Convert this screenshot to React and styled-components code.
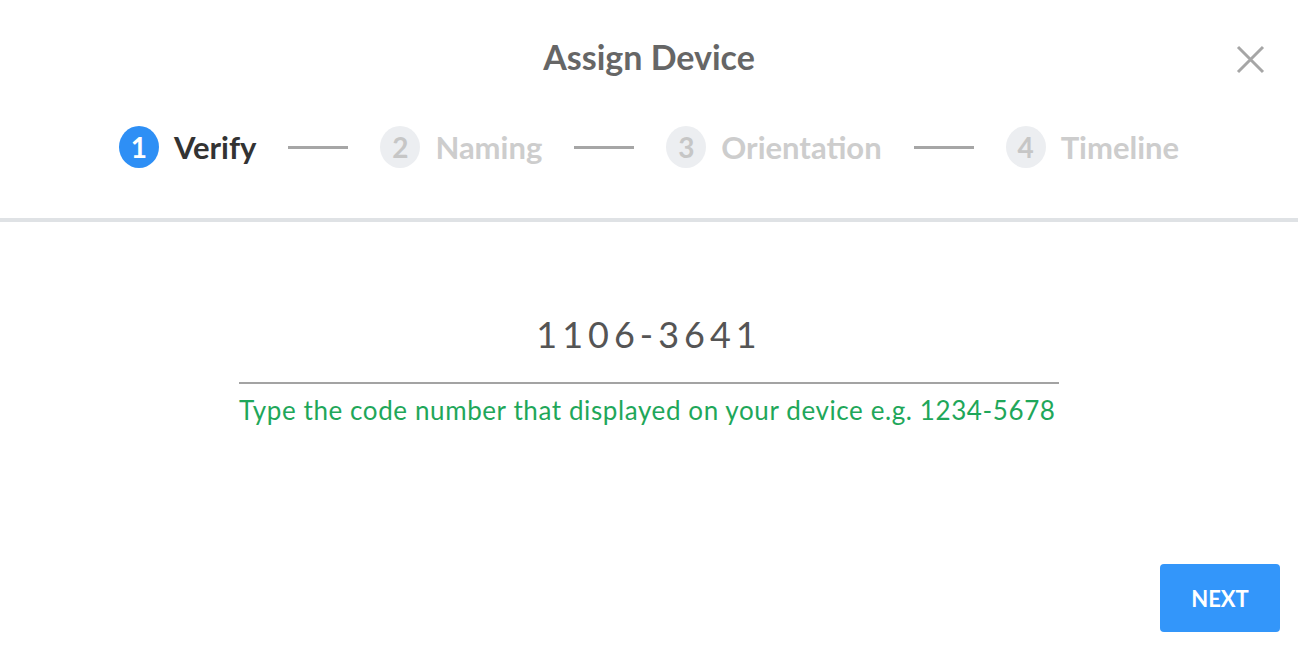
import React, {useState} from 'react'
import styled, {createGlobalStyle} from 'styled-components'

const GlobalStyle = createGlobalStyle`
  html, body {
    margin: 0;
    padding: 0;
    background: #ffffff;
  }
  body {
    font-family: Lato, "Open Sans", sans-serif;
  }
`

const Modal = styled.div`
  display: flex;
  flex-direction: column;
  width: 100vw;
  height: 652px;
  background: #fff;
  overflow: hidden;
`

const Header = styled.header`
  position: relative;
  display: flex;
  flex-direction: column;
  align-items: center;
  padding: 37px 0 50px;
  border-bottom: 4px solid #dfe2e5;
`

const Title = styled.h2`
  margin: 0;
  height: 40px;
  line-height: 40px;
  font-size: 34px;
  font-weight: 700;
  color: #666;
`

const Close = styled.button`
  position: absolute;
  top: 44px;
  right: 32px;
  width: 31px;
  height: 31px;
  padding: 0;
  border: none;
  background: none;
  cursor: pointer;
`

const Stepper = styled.ol`
  display: flex;
  align-items: center;
  margin: 49px 0 0;
  padding: 0;
  list-style: none;
  height: 42px;
`

const Step = styled.li`
  display: flex;
  align-items: center;
  gap: 15px;
`

const Badge = styled.span`
  display: flex;
  align-items: center;
  justify-content: center;
  width: 40px;
  height: 42px;
  border-radius: 50%;
  font-size: 28px;
  font-weight: 700;
  background: ${props => (props.active ? '#2e8ff5' : '#eceef1')};
  color: ${props => (props.active ? '#fff' : '#c6c6c6')};
`

const Label = styled.span`
  font-size: 31px;
  font-weight: 700;
  color: ${props => (props.active ? '#333' : '#cdcdcd')};
`

const Connector = styled.span`
  width: 60px;
  height: 3px;
  margin: 0 32px;
  background: #a6a6a6;
`

const Body = styled.main`
  display: flex;
  flex-direction: column;
  align-items: center;
  padding-top: 80px;
`

const CodeInput = styled.input`
  box-sizing: border-box;
  width: 820px;
  height: 82px;
  padding: 0 0 16px;
  border: none;
  border-bottom: 2px solid #a3a3a3;
  outline: none;
  text-align: center;
  font-family: inherit;
  font-size: 36px;
  letter-spacing: 5px;
  color: #555;
  background: transparent;
`

const Hint = styled.p`
  width: 820px;
  margin: 11px 0 0;
  line-height: 30px;
  font-size: 26px;
  letter-spacing: 0.6px;
  white-space: nowrap;
  color: #1fa75a;
  text-align: left;
`

const Footer = styled.footer`
  display: flex;
  justify-content: flex-end;
  margin-top: auto;
  padding: 0 18px 20px;
`

const NextButton = styled.button`
  width: 120px;
  height: 68px;
  border: none;
  border-radius: 4px;
  background: #3396fa;
  color: #fff;
  font-family: inherit;
  font-size: 22px;
  font-weight: 700;
  cursor: pointer;
`

const steps = ['Verify', 'Naming', 'Orientation', 'Timeline']

const App = () => {
    const [code, setCode] = useState('1106-3641')
    const current = 0

    return (
        <>
            <GlobalStyle/>
            <Modal>
                <Header>
                    <Title>Assign Device</Title>
                    <Close aria-label="Close">
                        <svg width="31" height="31" viewBox="0 0 31 31">
                            <path d="M3 3 L28 28 M28 3 L3 28" stroke="#a6a6a6" strokeWidth="3" fill="none"/>
                        </svg>
                    </Close>
                    <Stepper>
                        {steps.map((step, index) => (
                            <React.Fragment key={step}>
                                {index > 0 && <Connector/>}
                                <Step>
                                    <Badge active={index === current}>{index + 1}</Badge>
                                    <Label active={index === current}>{step}</Label>
                                </Step>
                            </React.Fragment>
                        ))}
                    </Stepper>
                </Header>
                <Body>
                    <CodeInput value={code} onChange={e => setCode(e.target.value)}/>
                    <Hint>Type the code number that displayed on your device e.g. 1234-5678</Hint>
                </Body>
                <Footer>
                    <NextButton>NEXT</NextButton>
                </Footer>
            </Modal>
        </>
    )
}

export default App
